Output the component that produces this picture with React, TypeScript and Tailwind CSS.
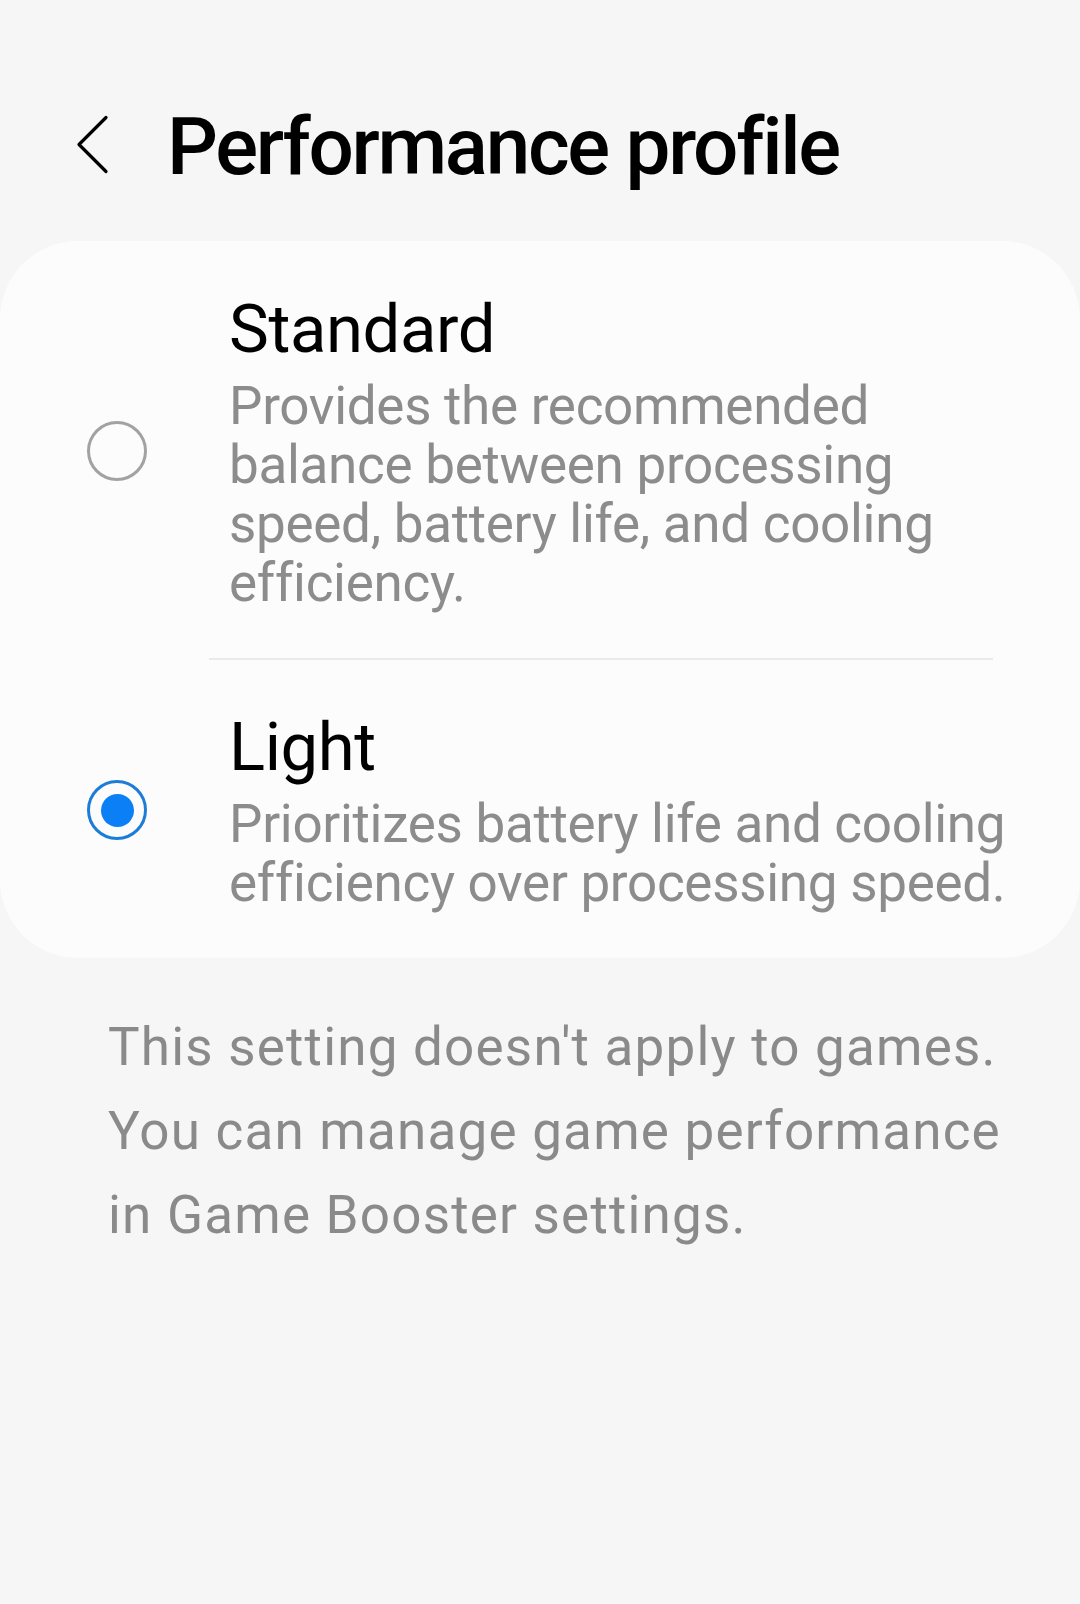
import React from "react";

const font = { fontFamily: "Roboto, 'Noto Sans', sans-serif" };

interface Option {
  title: string;
  lines: string[];
  selected: boolean;
}

const options: Option[] = [
  {
    title: "Standard",
    lines: [
      "Provides the recommended",
      "balance between processing",
      "speed, battery life, and cooling",
      "efficiency.",
    ],
    selected: false,
  },
  {
    title: "Light",
    lines: [
      "Prioritizes battery life and cooling",
      "efficiency over processing speed.",
    ],
    selected: true,
  },
];

const Radio = ({ selected }: { selected: boolean }) =>
  selected ? (
    <div className="flex h-[60px] w-[60px] items-center justify-center rounded-full border-[3px] border-[#1d7dd6]">
      <div className="h-[33px] w-[33px] rounded-full bg-[#0b80f6]" />
    </div>
  ) : (
    <div className="h-[60px] w-[60px] rounded-full border-[3px] border-[#a2a2a2]" />
  );

const OptionRow = ({ option }: { option: Option }) => (
  <div className="flex items-center">
    <div className="flex w-[229px] shrink-0 justify-start pl-[87px]">
      <Radio selected={option.selected} />
    </div>
    <div className="flex flex-col">
      <div className="text-[67px] leading-[81px] tracking-[-0.4px] text-black">
        {option.title}
      </div>
      <div className="mt-[7px] text-[53px] leading-[59px] tracking-[-0.3px] text-[#8c8c8c]">
        {option.lines.map((line) => (
          <div key={line} className="whitespace-nowrap">
            {line}
          </div>
        ))}
      </div>
    </div>
  </div>
);

export default function App() {
  return (
    <div className="min-h-[1604px] w-[1080px] bg-[#f6f6f6]" style={font}>
      <div className="flex items-start pl-[76px] pt-[107px]">
        <svg
          className="mt-[8px]"
          width="34"
          height="60"
          viewBox="0 0 34 60"
          fill="none"
        >
          <path
            d="M30 2.5 L3 29.5 L30 56.5"
            stroke="#000"
            strokeWidth="3.2"
            strokeLinecap="round"
            strokeLinejoin="round"
          />
        </svg>
        <h1 className="ml-[57px] text-[80px] font-medium leading-[80px] tracking-[-2.3px] text-black">
          Performance profile
        </h1>
      </div>

      <div className="mt-[54px] rounded-[78px] bg-[#fcfcfc]">
        <div className="pb-[45px] pt-[48px]">
          <OptionRow option={options[0]} />
        </div>
        <div className="ml-[209px] mr-[87px] h-[2px] bg-[#eaeaea]" />
        <div className="pb-[45px] pt-[47px]">
          <OptionRow option={options[1]} />
        </div>
      </div>

      <div className="mt-[47px] pl-[108px] text-[53px] leading-[84px] tracking-[1.2px] text-[#8a8a8a]">
        <div className="whitespace-nowrap">This setting doesn't apply to games.</div>
        <div className="whitespace-nowrap">You can manage game performance</div>
        <div className="whitespace-nowrap">in Game Booster settings.</div>
      </div>
    </div>
  );
}
